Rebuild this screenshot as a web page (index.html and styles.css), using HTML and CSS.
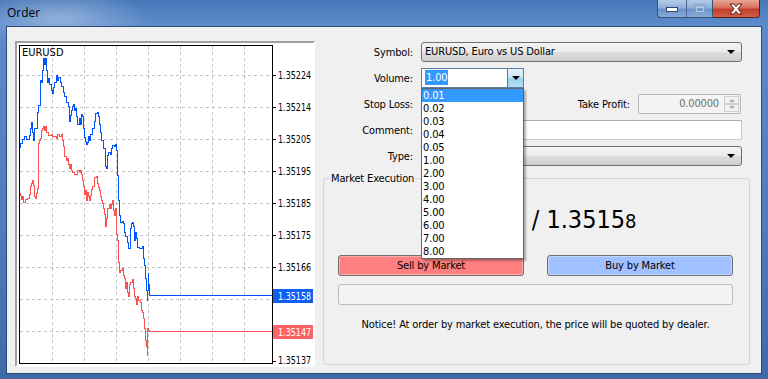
FILE: index.html
```html
<!DOCTYPE html>
<html lang="en">
<head>
    <meta charset="UTF-8">
    <meta name="viewport" content="width=device-width, initial-scale=1.0">
    <link rel="stylesheet" href="styles.css">
</head>
<body>
    <div class="window">
        <div class="titlebar">
            <span class="title">Order</span>
            <div class="caption">
                <div class="cap-group">
                    <div class="cap-btn cap-min">
                        <svg width="12" height="6" viewBox="0 0 12 6"><rect x="0.5" y="0.5" width="11" height="4" fill="#fff" stroke="#34465e"/></svg>
                    </div>
                    <div class="cap-btn cap-max">
                        <svg width="12" height="10" viewBox="0 0 12 10"><rect x="0.5" y="0.5" width="11" height="9" fill="none" stroke="#8aa3c4"/><rect x="2.5" y="3.5" width="7" height="4" fill="none" stroke="#b8cbe3"/></svg>
                    </div>
                </div>
                <div class="cap-btn cap-close">
                    <svg width="14" height="12" viewBox="0 0 14 12"><polygon points="1,1 4.8,1 7,3.6 9.2,1 13,1 9,5.8 13,11 9.2,11 7,8.2 4.8,11 1,11 5,5.8" fill="#fff" stroke="#5b1b12" stroke-width="1"/></svg>
                </div>
            </div>
        </div>

        <div class="client">
            <div class="chart-panel">
                <svg width="296" height="322" viewBox="17 43 296 322">
                    <rect x="17" y="43" width="296" height="322" fill="#fff"/>
                    <g class="grid">
                        <line x1="52.5" y1="46" x2="52.5" y2="363"/>
                        <line x1="84.5" y1="46" x2="84.5" y2="363"/>
                        <line x1="116.5" y1="46" x2="116.5" y2="363"/>
                        <line x1="148.5" y1="46" x2="148.5" y2="363"/>
                        <line x1="180.5" y1="46" x2="180.5" y2="363"/>
                        <line x1="212.5" y1="46" x2="212.5" y2="363"/>
                        <line x1="244.5" y1="46" x2="244.5" y2="363"/>
                        <line x1="20" y1="75.5" x2="272" y2="75.5"/>
                        <line x1="20" y1="107.5" x2="272" y2="107.5"/>
                        <line x1="20" y1="139.5" x2="272" y2="139.5"/>
                        <line x1="20" y1="171.5" x2="272" y2="171.5"/>
                        <line x1="20" y1="203.5" x2="272" y2="203.5"/>
                        <line x1="20" y1="235.5" x2="272" y2="235.5"/>
                        <line x1="20" y1="267.5" x2="272" y2="267.5"/>
                        <line x1="20" y1="299.5" x2="272" y2="299.5"/>
                        <line x1="20" y1="331.5" x2="272" y2="331.5"/>
                    </g>

                    <g transform="translate(0.5 0.5)">
                        <polyline class="ask" points="20,147 20,143 22,143 22,139 24,139 24,136 26,136 26,139 29,139 29,135 30,135 30,128 31,128 31,122 32,122 32,132 33,132 33,140 34,140 34,128 37,128 37,112 38,112 38,105 40,105 40,80 41,80 41,82 42,82 42,70 43,70 43,58 44,58 44,64 45,64 45,58 46,58 46,70 47,70 47,82 48,82 48,78 49,78 49,84 51,84 51,90 52,90 52,93 53,93 53,87 54,87 54,82 56,82 56,75 57,75 57,80 58,80 58,77 60,77 60,82 61,82 61,86 63,86 63,92 64,92 64,96 66,96 66,102 68,102 68,106 69,106 69,121 70,121 70,115 71,115 71,110 72,110 72,106 73,106 73,104 74,104 74,110 75,110 75,108 76,108 76,116 77,116 77,124 79,124 79,118 80,118 80,124 81,124 81,114 82,114 82,116 83,116 83,128 84,128 84,137 85,137 85,141 86,141 86,144 87,144 87,142 88,142 88,136 89,136 89,140 90,140 90,134 92,134 92,128 94,128 94,121 95,121 95,113 97,113 97,112 98,112 98,116 99,116 99,124 100,124 100,132 101,132 101,140 103,140 103,148 105,148 105,166 106,166 106,168 107,168 107,155 108,155 108,152 110,152 110,154 111,154 111,148 112,148 112,145 114,145 114,146 115,146 115,144 116,144 116,150 117,150 117,175 118,175 118,200 119,200 119,215 120,215 120,222 122,222 122,221 123,221 123,223 124,223 124,232 125,232 125,236 127,236 127,242 128,242 128,248 130,248 130,228 131,228 131,223 132,223 132,222 133,222 133,226 134,226 134,240 135,240 135,232 136,232 136,238 137,238 137,247 139,247 139,248 142,248 142,246 143,246 143,258 144,258 144,265 145,265 145,278 146,278 146,290 147,290 147,300 147,290 148,290 148,272 148,284 149,284 149,295 272,295"/>
                        <polyline class="bid" points="20,192 20,195 21,195 21,199 22,199 22,196 23,196 23,202 25,202 25,199 27,199 27,198 29,198 29,194 30,194 30,186 31,186 31,183 32,183 32,180 33,180 33,185 34,185 34,196 35,196 35,198 36,198 36,193 37,193 37,188 38,188 38,143 39,143 39,140 40,140 40,138 41,138 41,130 42,130 42,128 43,128 43,126 44,126 44,130 45,130 45,126 46,126 46,132 48,132 48,135 51,135 51,134 52,134 52,136 56,136 56,138 57,138 57,134 59,134 59,136 61,136 61,134 62,134 62,140 63,140 63,146 64,146 64,156 66,156 66,160 67,160 67,158 68,158 68,164 69,164 69,168 70,168 70,164 71,164 71,170 72,170 72,172 74,172 74,174 77,174 77,170 79,170 79,172 80,172 80,170 81,170 81,174 82,174 82,180 83,180 83,186 84,186 84,194 85,194 85,190 86,190 86,200 87,200 87,192 88,192 88,196 89,196 89,200 90,200 90,195 91,195 91,189 92,189 92,186 94,186 94,177 96,177 96,176 97,176 97,183 98,183 98,187 99,187 99,190 100,190 100,196 101,196 101,200 102,200 102,203 103,203 103,208 104,208 104,214 105,214 105,226 106,226 106,218 107,218 107,208 109,208 109,204 110,204 110,208 111,208 111,204 112,204 112,200 113,200 113,210 114,210 114,215 115,215 115,208 116,208 116,234 117,234 117,240 118,240 118,262 119,262 119,272 120,272 120,270 122,270 122,268 123,268 123,275 124,275 124,278 125,278 125,288 126,288 126,282 127,282 127,292 128,292 128,296 129,296 129,284 130,284 130,282 132,282 132,279 133,279 133,288 134,288 134,296 135,296 135,298 136,298 136,304 137,304 137,296 138,296 138,300 140,300 140,302 141,302 141,310 142,310 142,312 143,312 143,318 144,318 144,328 145,328 145,340 146,340 146,346 147,346 147,355 147,328 148,328 148,330 149,330 149,331 272,331"/>
                    </g>

                    <rect class="frame" x="19.5" y="45.5" width="253" height="318"/>
                    <g class="ticks">
                        <line x1="272" y1="75.5" x2="276" y2="75.5"/>
                        <line x1="272" y1="107.5" x2="276" y2="107.5"/>
                        <line x1="272" y1="139.5" x2="276" y2="139.5"/>
                        <line x1="272" y1="171.5" x2="276" y2="171.5"/>
                        <line x1="272" y1="203.5" x2="276" y2="203.5"/>
                        <line x1="272" y1="235.5" x2="276" y2="235.5"/>
                        <line x1="272" y1="267.5" x2="276" y2="267.5"/>
                        <line x1="272" y1="361.5" x2="276" y2="361.5"/>
                    </g>
                    <text class="sym" x="22" y="56">EURUSD</text>
                    <rect x="273" y="289" width="40" height="14" fill="#0f5ff3"/>
                    <rect x="273" y="325" width="40" height="14" fill="#ff6262"/>
                    <g class="prices" transform="translate(278 0) scale(0.81 1)">
                        <text x="0" y="79.5">1.35224</text>
                        <text x="0" y="111.5">1.35214</text>
                        <text x="0" y="143.5">1.35205</text>
                        <text x="0" y="175.5">1.35195</text>
                        <text x="0" y="207.5">1.35185</text>
                        <text x="0" y="239.5">1.35175</text>
                        <text x="0" y="271.5">1.35166</text>
                        <text x="0" y="364">1.35137</text>
                        <text class="tag" x="0" y="300">1.35158</text>
                        <text class="tag" x="0" y="336">1.35147</text>
                    </g>
                </svg>
            </div>

            <div class="order-form">
                <div class="row">
                    <label class="lbl">Symbol:</label>
                    <div class="combo wide">EURUSD, Euro vs US Dollar<span class="arrow"></span></div>
                </div>
                <div class="row">
                    <label class="lbl">Volume:</label>
                    <div class="combo-edit">
                        <span class="edit-text"><span class="selected">1.00</span></span>
                        <span class="drop-btn"><span class="arrow"></span></span>
                    </div>
                </div>
                <div class="row">
                    <label class="lbl">Stop Loss:</label>
                    <div class="spin"><span class="spin-btns"><span></span><span></span></span></div>
                    <label class="lbl tp-lbl">Take Profit:</label>
                    <div class="spin disabled">0.00000<span class="spin-btns"><span class="up"></span><span class="down"></span></span></div>
                </div>
                <div class="row">
                    <label class="lbl">Comment:</label>
                    <div class="textbox wide"></div>
                </div>
                <div class="row">
                    <label class="lbl">Type:</label>
                    <div class="combo wide"><span class="arrow"></span></div>
                </div>

                <fieldset class="group">
                    <legend>Market Execution</legend>
                    <div class="quote"><span class="bid-price">1.3514<small>7</small></span> / 1.3515<small>8</small></div>
                    <div class="actions">
                        <button class="btn sell">Sell by Market</button>
                        <button class="btn buy">Buy by Market</button>
                    </div>
                    <div class="progress"></div>
                    <p class="notice">Notice! At order by market execution, the price will be quoted by dealer.</p>
                </fieldset>

                <ul class="vol-list">
                    <li class="sel">0.01</li>
                    <li>0.02</li>
                    <li>0.03</li>
                    <li>0.04</li>
                    <li>0.05</li>
                    <li>1.00</li>
                    <li>2.00</li>
                    <li>3.00</li>
                    <li>4.00</li>
                    <li>5.00</li>
                    <li>6.00</li>
                    <li>7.00</li>
                    <li>8.00</li>
                </ul>
            </div>
        </div>
    </div>
</body>
</html>
```

FILE: styles.css
```css
body {
    margin: 0;
    font-family: "DejaVu Sans Condensed", "DejaVu Sans", sans-serif;
    font-size: 11px;
    letter-spacing: -0.15px;
    color: #000;
}
.window {
    width: 768px;
    height: 379px;
    box-sizing: border-box;
    padding: 0 7px 6px;
    display: flex;
    flex-direction: column;
    background:
        radial-gradient(ellipse 90px 30px at 60px 18px, rgba(255, 255, 255, 0.35), rgba(255, 255, 255, 0)),
        linear-gradient(to bottom, #4677b9 0%, #5b8bca 24px, #4e7cbc 60%, #3f6aa8 100%);
}
.titlebar {
    height: 27px;
    display: flex;
    align-items: flex-start;
    flex-shrink: 0;
}
.title {
    font-family: "Open Sans", "Noto Sans", sans-serif;
    font-size: 12px;
    letter-spacing: 0;
    line-height: 26px;
}
.caption {
    display: flex;
    margin-left: auto;
    margin-right: 1px;
    height: 18px;
}
.cap-group {
    display: flex;
    border: 1px solid #3a5378;
    border-top: none;
    border-radius: 0 0 0 4px;
    background: linear-gradient(to bottom, #b4cbe8 0%, #8fb0db 45%, #6b93c8 55%, #86acd9 100%);
}
.cap-btn {
    display: flex;
    align-items: center;
    justify-content: center;
}
.cap-min {
    width: 28px;
    border-right: 1px solid #4c678e;
}
.cap-min svg {
    margin-top: 3px;
}
.cap-max {
    width: 25px;
}
.cap-close {
    width: 46px;
    border: 1px solid #5e2118;
    border-top: none;
    border-left: none;
    border-radius: 0 0 4px 0;
    background: linear-gradient(to bottom, #e8a697 0%, #d66f5c 45%, #c23e27 55%, #d2614a 100%);
}
.client {
    flex: 1;
    display: flex;
    align-items: flex-start;
    background: #f0f0f0;
    border: 1px solid #eef2f8;
    box-shadow: 0 0 0 1px #2c4a78;
}
.chart-panel {
    width: 296px;
    height: 322px;
    margin: 13px 0 0 7px;
    border: 2px solid;
    border-color: #a0a0a0 #ffffff #ffffff #a0a0a0;
    box-shadow: inset 1px 1px 0 #696969;
    flex-shrink: 0;
}
.chart-panel svg {
    display: block;
}
.grid line {
    stroke: #c4c4c4;
    stroke-width: 1;
    stroke-dasharray: 3 3;
}
.ask, .bid {
    fill: none;
    stroke-width: 1;
    shape-rendering: crispEdges;
}
.ask {
    stroke: #0055ff;
}
.bid {
    stroke: #ff5050;
}
.frame {
    fill: none;
    stroke: #000;
    stroke-width: 1;
}
.ticks line {
    stroke: #000;
}
.sym, .prices text {
    font-family: "DejaVu Sans Condensed", "DejaVu Sans", sans-serif;
    font-size: 11px;
    letter-spacing: 0;
}
.prices .tag {
    fill: #fff;
}
.order-form {
    position: relative;
    width: 427px;
    margin-left: 8px;
    padding-top: 14px;
}
.row {
    display: flex;
    align-items: center;
    height: 20px;
    margin-bottom: 6px;
}
.lbl {
    width: 90px;
    margin-right: 8px;
    text-align: right;
    flex-shrink: 0;
}
.tp-lbl {
    width: 106px;
}
.wide {
    width: 321px;
}
.combo {
    position: relative;
    height: 20px;
    box-sizing: border-box;
    padding-left: 3px;
    line-height: 18px;
    border: 1px solid #707070;
    border-radius: 3px;
    background: linear-gradient(to bottom, #f3f3f3 0%, #ebebeb 50%, #dddddd 51%, #d0d0d0 100%);
}
.arrow {
    position: absolute;
    right: 6px;
    top: 7px;
    border-left: 4px solid transparent;
    border-right: 4px solid transparent;
    border-top: 4px solid #000;
}
.combo-edit {
    display: flex;
    width: 103px;
    height: 20px;
    box-sizing: border-box;
    border: 1px solid #5d7fa3;
    background: #fff;
}
.edit-text {
    flex: 1;
    padding-left: 3px;
    line-height: 18px;
}
.selected {
    background: #3399ff;
    color: #fff;
    padding: 1px 1px;
}
.drop-btn {
    position: relative;
    width: 15px;
    border-left: 1px solid #3c7fb1;
    background: linear-gradient(to bottom, #e5f4fc 0%, #c4e5f6 50%, #98d1ef 51%, #b6dff5 100%);
}
.drop-btn .arrow {
    right: 3px;
    top: 7px;
}
.spin {
    position: relative;
    width: 103px;
    height: 20px;
    box-sizing: border-box;
    padding-right: 21px;
    line-height: 18px;
    text-align: right;
    border: 1px solid #abadb3;
    border-radius: 2px;
    background: #fff;
}
.spin.disabled {
    background: #f4f4f4;
    border-color: #b5b9bd;
    color: #6d6d6d;
}
.spin-btns {
    position: absolute;
    right: 1px;
    top: 1px;
    width: 15px;
    height: 16px;
    display: flex;
    flex-direction: column;
}
.spin-btns span {
    flex: 1;
    position: relative;
    border: 1px solid #d0d0d0;
    background: #f2f2f2;
}
.spin-btns span::after {
    content: "";
    position: absolute;
    left: 4px;
    top: 2px;
    border-left: 3px solid transparent;
    border-right: 3px solid transparent;
}
.spin-btns .up::after {
    border-bottom: 3px solid #a8a8a8;
}
.spin-btns .down::after {
    border-top: 3px solid #a8a8a8;
    top: 1px;
}
.textbox {
    height: 20px;
    box-sizing: border-box;
    border: 1px solid #c5cad1;
    border-top-color: #abadb3;
    background: #fff;
}
.group {
    margin: 3px 0 0;
    padding: 0 16px 0 14px;
    height: 193px;
    box-sizing: border-box;
    border: 1px solid #d2d6da;
    border-radius: 3px;
}
.group legend {
    margin-left: -9px;
    padding: 0 2px;
    line-height: 13px;
}
.quote {
    margin-top: 21px;
    text-align: center;
    font-size: 25px;
    letter-spacing: 0;
    line-height: 28px;
}
.quote small {
    font-size: 20px;
}
.actions {
    display: flex;
    justify-content: space-between;
    margin-top: 20px;
}
.btn {
    width: 186px;
    height: 21px;
    padding: 0;
    font-family: inherit;
    font-size: 11px;
    letter-spacing: inherit;
    border: 1px solid #707070;
    border-radius: 3px;
    box-shadow: inset 0 0 0 1px rgba(255, 255, 255, 0.35);
}
.sell {
    background: #ff8080;
}
.buy {
    background: #a0c0ff;
}
.progress {
    margin-top: 8px;
    height: 21px;
    box-sizing: border-box;
    border: 1px solid #bcbcbc;
    border-radius: 3px;
    background: #f3f3f3;
}
.notice {
    margin: 13px 0 0;
    text-align: center;
    line-height: 14px;
}
.vol-list {
    position: absolute;
    left: 98px;
    top: 60px;
    width: 103px;
    box-sizing: border-box;
    margin: 0;
    padding: 0;
    list-style: none;
    border: 1px solid #646464;
    background: #fff;
    box-shadow: 2px 2px 2px rgba(0, 0, 0, 0.3);
}
.vol-list li {
    height: 13px;
    line-height: 13px;
    padding-left: 1px;
}
.vol-list .sel {
    background: #3399ff;
    color: #fff;
}
```
